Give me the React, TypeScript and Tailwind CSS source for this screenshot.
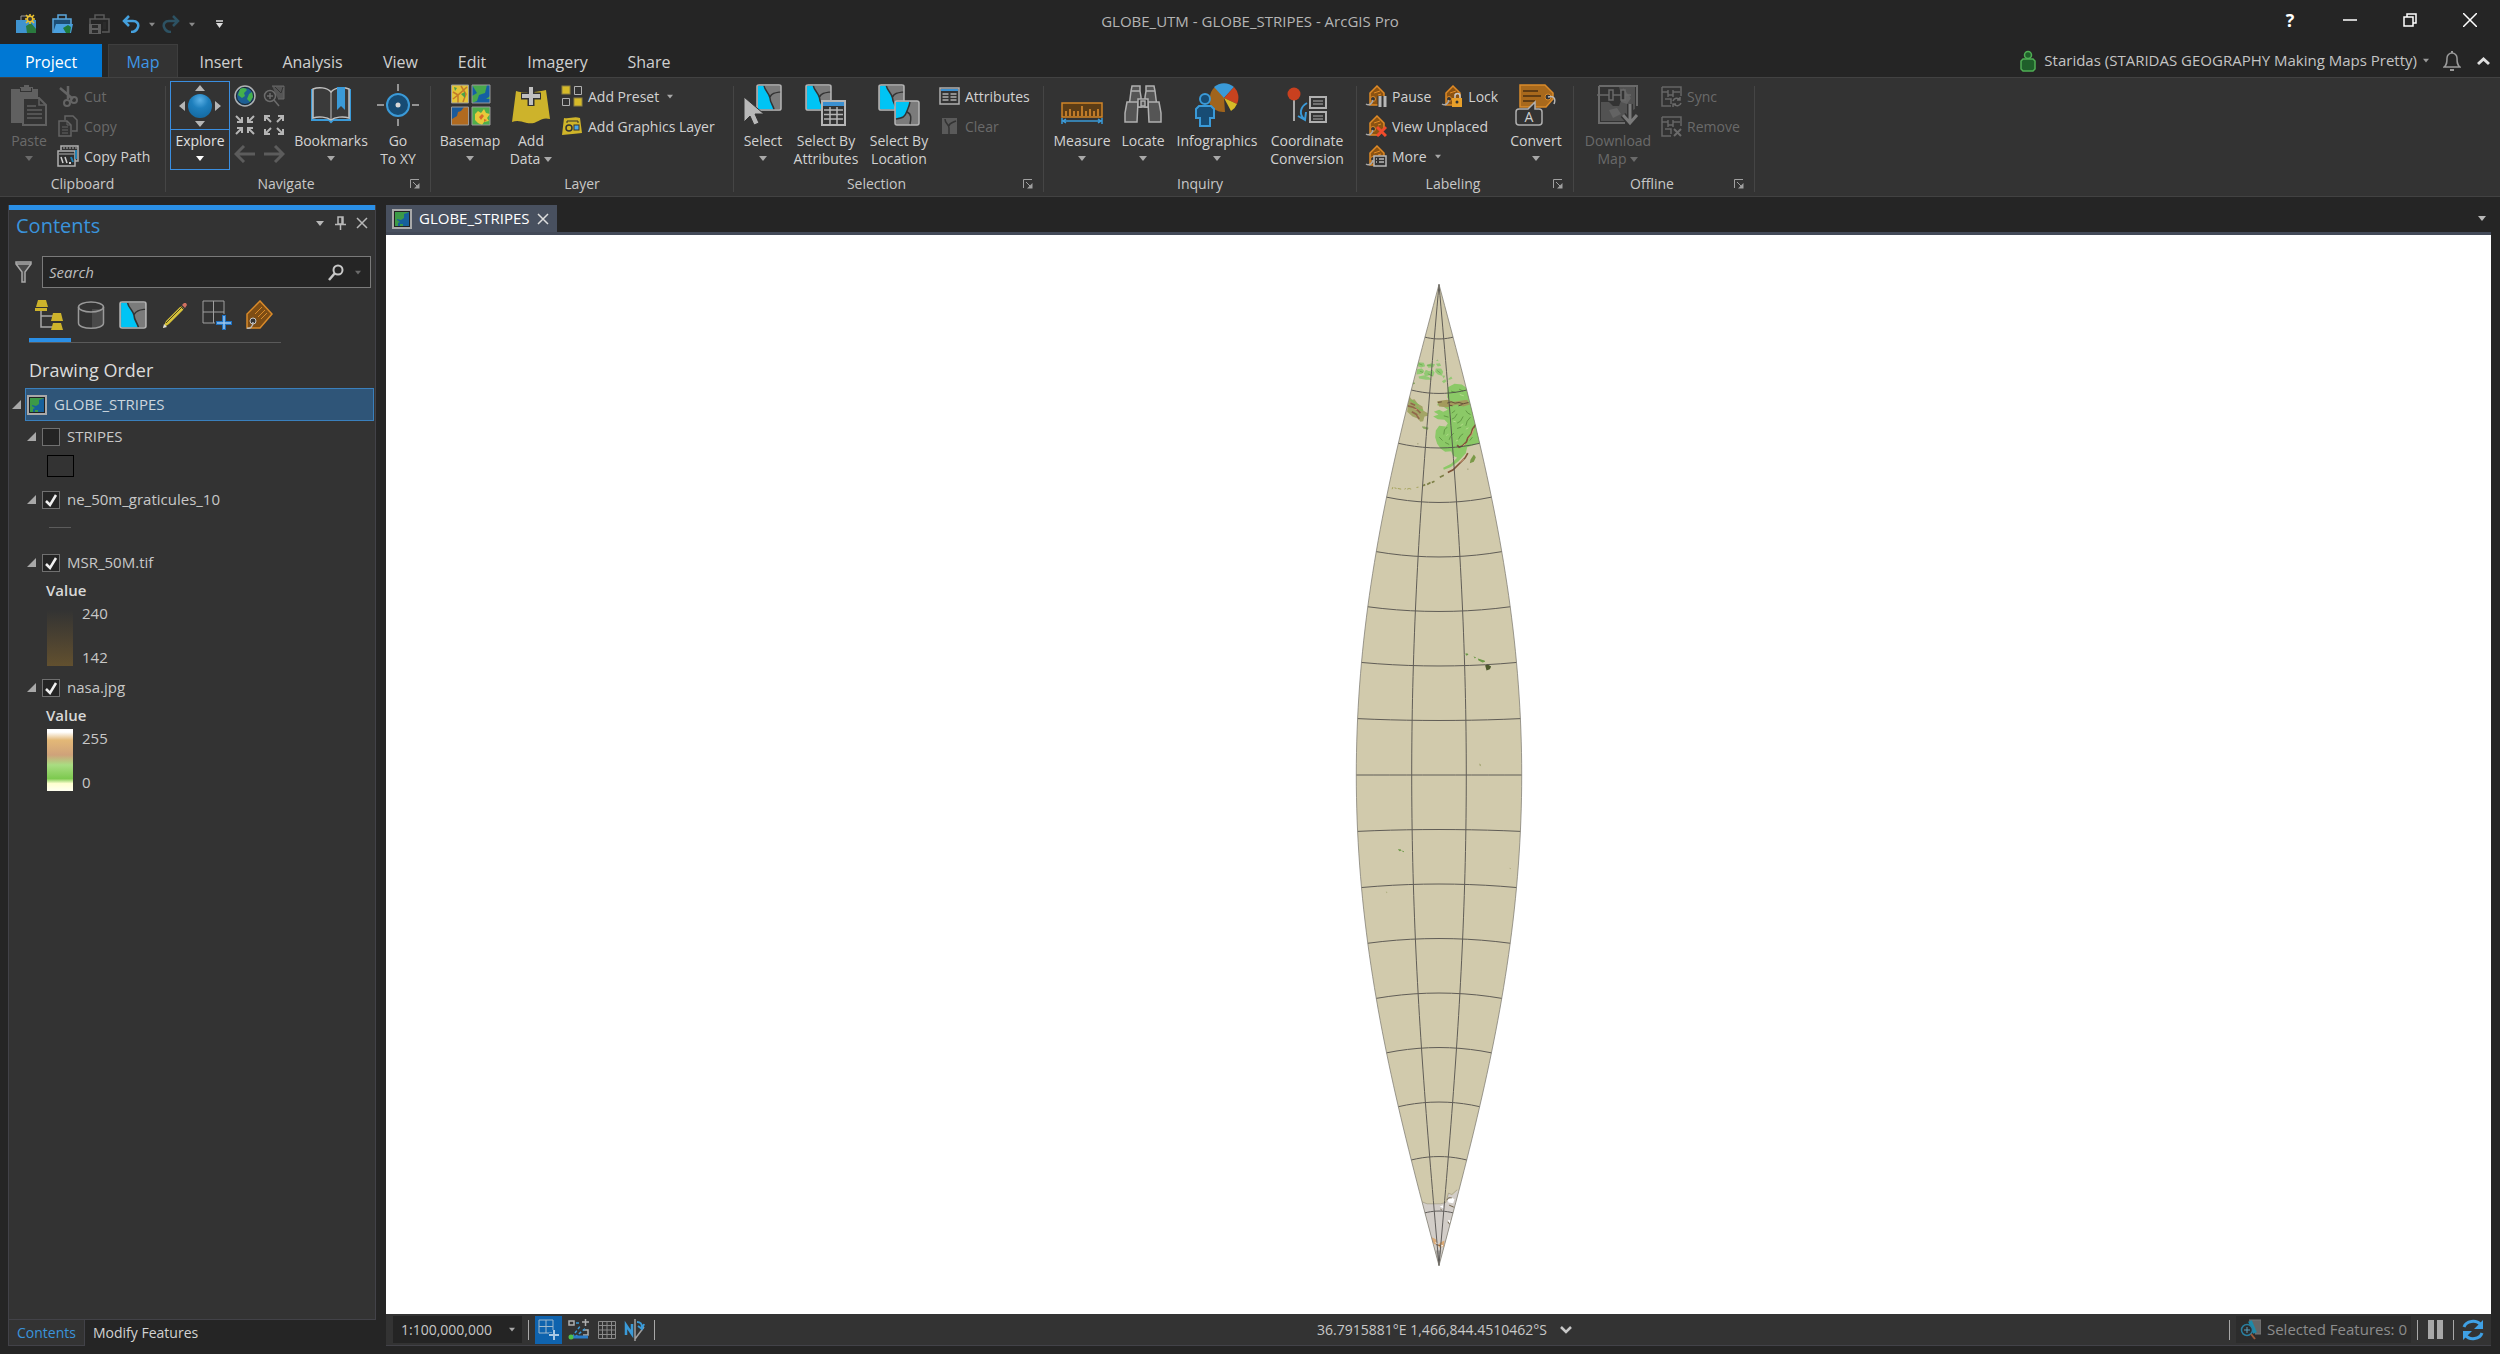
import { useState } from "react";
import type { ReactNode } from "react";

const R = 312.3;
const rad = (deg: number) => (deg * Math.PI) / 180;

// Transverse Mercator, central meridian in the middle of the strip
function project(lat: number, lon: number): [number, number] {
  const p = rad(lat);
  const l = rad(lon);
  const x = R * Math.atanh(Math.cos(p) * Math.sin(l));
  const y = -R * Math.atan2(Math.sin(p), Math.cos(p) * Math.cos(l));
  return [x, y];
}

function toPath(points: [number, number][]) {
  return points.map(([x, y], i) => `${i ? "L" : "M"}${x.toFixed(2)} ${y.toFixed(2)}`).join("");
}

function meridian(lon: number) {
  const pts: [number, number][] = [];
  for (let lat = -90; lat <= 90; lat += 2) pts.push(project(lat, lon));
  return pts;
}

function parallel(lat: number) {
  const pts: [number, number][] = [];
  for (let lon = -15; lon <= 15; lon += 3) pts.push(project(lat, lon));
  return pts;
}

const OUTLINE = toPath([...meridian(-15), ...meridian(15).reverse()]) + "Z";
const LATS = [-80, -70, -60, -50, -40, -30, -20, -10, 0, 10, 20, 30, 40, 50, 60, 70, 80];

function Arrow({ className = "text-[#a8a8a8]" }: { className?: string }) {
  return (
    <svg width="8" height="5" viewBox="0 0 8 5" className={`shrink-0 ${className}`} fill="currentColor">
      <path d="M0 0h8L4 5z" />
    </svg>
  );
}

function Launcher() {
  return (
    <button aria-label="Options" className="w-6 h-5 pl-1 flex items-center text-[#a0a0a0]">
      <svg width="10" height="10" viewBox="0 0 10 10" fill="none" stroke="currentColor">
        <path d="M.5 9V.5H9M3 3l5 5" />
        <path d="M9.500 4v5.500H4z" fill="currentColor" stroke="none" />
      </svg>
    </button>
  );
}

function Svg({ w, h, children }: { w: number; h: number; children: ReactNode }) {
  return (
    <svg width={w} height={h} viewBox={`0 0 ${w} ${h}`} fill="none" className="shrink-0">
      {children}
    </svg>
  );
}

function Group({ label, width, launcher, children }: { label: string; width: string; launcher?: boolean; children: ReactNode }) {
  return (
    <section className={`${width} shrink-0 flex`}>
      <div className="flex-1 min-w-0 flex flex-col">
        <div className="flex h-[94px] pt-[3px]">{children}</div>
        <div className="flex items-center h-[25px]">
          <span className="flex-1 text-center">{label}</span>
          {launcher && <Launcher />}
        </div>
      </div>
      <div className="w-px mt-2 mb-1 bg-[#454545]" />
    </section>
  );
}

type BigProps = { icon: ReactNode; lines: string[]; width: string; arrow?: boolean; disabled?: boolean };

function BigButton({ icon, lines, width, arrow, disabled }: BigProps) {
  const tone = disabled ? "text-[#6a6a6a]" : "text-[#d2d2d2]";
  return (
    <button disabled={disabled} className={`${width} h-[90px] shrink-0 flex flex-col items-center whitespace-nowrap ${tone}`}>
      <span className="h-12 flex items-center justify-center">{icon}</span>
      <span className="pt-[3px] flex flex-col items-center leading-[18px]">
        {lines.map((line, i) => (
          <span key={line} className="flex items-center gap-1">
            {line}
            {arrow && i === 1 && <Arrow className={disabled ? "text-[#6a6a6a]" : "text-[#a8a8a8]"} />}
          </span>
        ))}
        {arrow && lines.length === 1 && (
          <span className="h-4 flex items-center">
            <Arrow className={disabled ? "text-[#6a6a6a]" : "text-[#a8a8a8]"} />
          </span>
        )}
      </span>
    </button>
  );
}

function SmallButton({ icon, label, arrow, disabled }: { icon: ReactNode; label: string; arrow?: boolean; disabled?: boolean }) {
  return (
    <button
      disabled={disabled}
      className={`h-[30px] flex items-center whitespace-nowrap ${disabled ? "text-[#6a6a6a]" : "text-[#d2d2d2]"}`}
    >
      <span className="w-6 mr-1 flex justify-center">{icon}</span>
      {label}
      {arrow && <span className="ml-2 flex"><Arrow className="w-1.5 text-[#a8a8a8]" /></span>}
    </button>
  );
}

function MapIcon() {
  return (
    <Svg w={20} h={20}>
      <rect x="1" y="1" width="18" height="18" fill="#3c9a48" stroke="#a9a9a9" strokeWidth="2" />
      <rect x="2.500" y="2.500" width="15" height="15" stroke="#222" />
      <path d="M17 3v14h-6v-2H8v2H6v-3l2-1-3-2v-1l4 1 3-2v-4l3-1z" fill="#17609c" />
    </Svg>
  );
}

function Feature({ x = 0, y = 0, w = 26, h = 31 }: { x?: number; y?: number; w?: number; h?: number }) {
  return (
    <g transform={`translate(${x} ${y}) scale(${w / 26} ${h / 31})`}>
      <rect x="1" y="1" width="24" height="29" rx="2" fill="#7b7b7b" />
      <path d="M2 2h6c1 6 5 8 6 14 0 5 3 8 4 13H2z" fill="#00c4f5" />
      <path d="M8 2c1 6 5 8 6 14 0 5 3 8 4 13M14 15c2-5 6-5 11-6" stroke="#333" strokeWidth="1.500" />
      <rect x="1" y="1" width="24" height="29" rx="2" stroke="#b5b5b5" strokeWidth="1.500" />
    </g>
  );
}

function TableGlyph({ x = 0, y = 0 }: { x?: number; y?: number }) {
  return (
    <g transform={`translate(${x} ${y})`}>
      <rect x="1" y="1" width="23" height="24" fill="#333" stroke="#b5b5b5" strokeWidth="2" />
      <path d="M2 2h21v4H2z" fill="#3a8fd0" />
      <path d="M3 10h19M3 14.500h19M3 19h19" stroke="#b5b5b5" strokeWidth="1.500" />
      <path d="M9 7v17M16 7v17" stroke="#b5b5b5" strokeWidth="1.500" />
    </g>
  );
}

function TagGlyph({ children }: { children: ReactNode }) {
  return (
    <Svg w={22} h={22}>
      <path d="M12 1l7 7v6l-5 6H5V8z" fill="#8c5312" stroke="#e08a25" strokeWidth="1.500" />
      <path d="M9 8l6-2M13 10l3-1" stroke="#e08a25" />
      <circle cx="8" cy="14" r="2.500" fill="#333" stroke="#e08a25" />
      <path d="M8 15c-1 4-4 6-7 4" stroke="#a9a9a9" strokeWidth="1.500" />
      {children}
    </Svg>
  );
}

function TrayIcon({ children }: { children: ReactNode }) {
  return (
    <Svg w={21} h={21}>
      <path d="M1 1h19v9M1 1v19h9M1 6h6v3h5V6h7M7 4v7M12 4v7M4 13h6v5" stroke="#666" strokeWidth="1.500" />
      {children}
    </Svg>
  );
}

const pasteIcon = (
  <Svg w={38} h={42}>
    <path d="M1 5h9V3h4V1h5v2h4v2h5v9H14v25H1z" fill="#606060" />
    <path d="M10 4h12v4H10z" fill="#333" />
    <path d="M11 4h10v3H11z" fill="#606060" />
    <path d="M13 14h16l7 7v20H13z" fill="#333" stroke="#606060" strokeWidth="2" />
    <path d="M29 14v7h7M17 22h9M17 26h15M17 30h15M17 34h15" stroke="#606060" strokeWidth="1.500" />
  </Svg>
);

const cutIcon = (
  <Svg w={20} h={22}>
    <path d="M2 3l13 11M10 1v13" stroke="#646464" strokeWidth="2.500" />
    <circle cx="16" cy="15" r="3" stroke="#646464" strokeWidth="2" />
    <circle cx="9" cy="18" r="3" stroke="#646464" strokeWidth="2" />
  </Svg>
);

const copyIcon = (
  <Svg w={20} h={22}>
    <path d="M7 5V1h8l4 4v11h-5" stroke="#646464" strokeWidth="1.500" />
    <path d="M1 6h8l4 4v11H1z" stroke="#646464" strokeWidth="1.500" />
    <path d="M9 6v4h4M4 12h6M4 15h6M4 18h6" stroke="#646464" />
  </Svg>
);

const copyPathIcon = (
  <Svg w={22} h={22}>
    <path d="M4 5V1h17v15h-3" stroke="#b0b0b0" strokeWidth="1.500" />
    <path d="M6 3h14" stroke="#b0b0b0" strokeDasharray="2 1" />
    <rect x="1" y="6" width="17" height="15" fill="#2e2e2e" stroke="#b0b0b0" strokeWidth="1.500" />
    <path d="M2 9h15" stroke="#b0b0b0" />
    <path d="M4 12l2 6M8 12l2 6" stroke="#d0d0d0" strokeWidth="1.500" />
    <path d="M19 5v9M14 12l2 5" stroke="#1f7fb0" strokeWidth="2" />
    <path d="M12 17h2v2h-2z" fill="#d0d0d0" />
  </Svg>
);

const exploreIcon = (
  <Svg w={42} h={42}>
    <defs>
      <radialGradient id="ball" cx=".5" cy=".25" r=".7">
        <stop offset="0" stopColor="#5ab0e6" />
        <stop offset=".5" stopColor="#1e7fbd" />
        <stop offset="1" stopColor="#166da6" />
      </radialGradient>
    </defs>
    <circle cx="21" cy="21" r="12" fill="url(#ball)" />
    <path d="M21 0l5 6H16zM21 42l5-6H16zM0 21l6-5v10zM42 21l-6-5v10z" fill="#b5b5b5" />
  </Svg>
);

const globeIcon = (
  <Svg w={22} h={22}>
    <circle cx="11" cy="11" r="10" fill="#1d5f94" stroke="#b0b0b0" strokeWidth="1.500" />
    <circle cx="11" cy="11" r="8.500" stroke="#222" />
    <path d="M6 4c3-2 6-1 7 1l-3 3 1 3-3 2-4-3zM15 9l3-2 1 5-3 5-3-3z" fill="#45b04c" />
  </Svg>
);

const zoomSelIcon = (
  <Svg w={22} h={22}>
    <path d="M9 1h12v13h-6" fill="#555" stroke="#686868" />
    <path d="M12 2l6 6 2-6" stroke="#333" />
    <circle cx="7" cy="11" r="5.500" fill="#333" stroke="#6c6c6c" strokeWidth="1.500" />
    <path d="M4 11h6M7 8v6M11 15l5 6" stroke="#6c6c6c" strokeWidth="1.500" />
  </Svg>
);

const zoomInIcon = (
  <Svg w={22} h={22}>
    <path d="M2 2l6 6M8 3v5H3M20 2l-6 6M14 3v5h5M2 20l6-6M8 19v-5H3M20 20l-6-6M14 19v-5h5" stroke="#b5b5b5" strokeWidth="2" />
  </Svg>
);

const zoomOutIcon = (
  <Svg w={22} h={22}>
    <path d="M8 8L2 2M2 7V2h5M14 8l6-6M20 7V2h-5M8 14l-6 6M2 15v5h5M14 14l6 6M20 15v5h-5" stroke="#b5b5b5" strokeWidth="2" />
  </Svg>
);

const bookmarksIcon = (
  <Svg w={42} h={38}>
    <path d="M2 3v31h17l2 2 2-2h17V3" stroke="#3a9ad8" strokeWidth="2" />
    <path d="M21 6c-4-5-13-5-18-3v29c6-2 14-1 18 2 4-3 12-4 18-2V3c-5-2-14-2-18 3z" fill="#3a3a3a" stroke="#c0c0c0" strokeWidth="1.500" />
    <path d="M21 6v27" stroke="#c0c0c0" />
    <path d="M27 1h8v23l-4-4-4 4z" fill="#3a9ad8" />
  </Svg>
);

const goToIcon = (
  <Svg w={42} h={42}>
    <circle cx="21" cy="21" r="11" fill="#174c74" stroke="#3a9ad8" strokeWidth="2" />
    <circle cx="21" cy="21" r="2.500" fill="#d8d8d8" />
    <path d="M21 0v7M21 35v7M0 21h7M35 21h7" stroke="#b5b5b5" strokeWidth="1.500" />
  </Svg>
);

const basemapIcon = (
  <Svg w={42} h={42}>
    <rect x="3" y="1" width="16" height="18" fill="#e3c53a" />
    <path d="M4 8l5 3 9-8M9 11v8M12 2l5 8-3 8M4 15l5-4" stroke="#c47a2a" strokeWidth="1.500" />
    <path d="M12 10l4-2v6zM5 3l3 1-2 3z" fill="#4aa04a" />
    <rect x="23" y="1" width="18" height="18" fill="#155fa5" />
    <path d="M23 1h15l-2 8-6 2-2 6-5 2v-7l5-3zM37 15l4-3v3z" fill="#48a84c" />
    <rect x="3" y="23" width="16" height="18" fill="#b06a1f" />
    <path d="M3 23h12l-3 4-3 1-1 4-5 3z" fill="#1a5a9a" />
    <rect x="23" y="23" width="18" height="18" fill="#4fae4b" />
    <path d="M26 30l3-3 3 2 3-4 2 4 4 1-3 4 2 3-5 1-2 3-4-2-3-3z" fill="#e8c93a" />
    <path d="M30 33l3-3 2 2-3 4zM35 35l3 1-3 2z" fill="#d86a2a" />
    <path d="M2.500 1h17v18h-17zM23 1h18v18H23zM2.500 23h17v18h-17zM23 23h18v18H23z" stroke="#9a9a9a" />
  </Svg>
);

const addDataIcon = (
  <Svg w={40} h={40}>
    <path d="M5 6c10 3 20 1 30-1l4 29c-10-3-12 6-23 4-7-2-10-3-15-1z" fill="#cdb32b" />
    <path d="M20 1v20M10 11h20" stroke="#333" strokeWidth="7" />
    <path d="M20 2v18M11 11h18" stroke="#c0c0c0" strokeWidth="4" />
  </Svg>
);

const presetIcon = (
  <Svg w={22} h={22}>
    <rect x="1" y="1" width="8" height="8" fill="#d6ba28" stroke="#8f8240" />
    <rect x="13" y="13" width="8" height="8" fill="#d6ba28" stroke="#8f8240" />
    <path d="M13.500 1.500h7v8h-7zM1.500 13.500h7v7h-7z" stroke="#b0b0b0" />
  </Svg>
);

const graphicsIcon = (
  <Svg w={22} h={20}>
    <path d="M3 2c6 1 10-2 16 0l2 15c-6 1-13 1-20 2z" fill="#d0b529" />
    <path d="M6 7V5h11v2" stroke="#333" />
    <circle cx="8" cy="12" r="3" stroke="#333" strokeWidth="1.500" />
    <rect x="13" y="9" width="5" height="5" fill="#4aa8e8" stroke="#333" />
  </Svg>
);

const selectIcon = (
  <Svg w={40} h={42}>
    <Feature x={13} y={0} w={26} h={27} />
    <path d="M1 13v25l6-6 4 9 5-2-4-9h9z" fill="#b8b8b8" stroke="#333" />
  </Svg>
);

const selectAttrIcon = (
  <Svg w={42} h={42}>
    <Feature x={0} y={0} w={27} h={27} />
    <TableGlyph x={16} y={16} />
  </Svg>
);

const selectLocIcon = (
  <Svg w={42} h={42}>
    <Feature x={0} y={0} w={27} h={27} />
    <rect x="17" y="17" width="24" height="24" rx="2" fill="#7b7b7b" stroke="#b5b5b5" strokeWidth="1.500" />
    <path d="M18 18h14c-1 5-2 6-3 9-2 6-4 7-11 8z" fill="#00c4f5" />
    <path d="M32 18c-1 5-2 6-3 9-2 6-4 7-11 8M29 28c5 2 4 7 3 12" stroke="#333" strokeWidth="1.500" />
  </Svg>
);

const attributesIcon = (
  <Svg w={21} h={18}>
    <rect x="1" y="1" width="19" height="16" stroke="#b0b0b0" strokeWidth="1.500" />
    <path d="M2 2h17v2H2z" fill="#3a8fd0" />
    <path d="M3.500 7h6M3.500 10h6M3.500 13h6M11.500 7h6M11.500 10h6M11.500 13h6" stroke="#b0b0b0" strokeWidth="1.500" />
  </Svg>
);

const clearIcon = (
  <Svg w={17} h={18}>
    <rect x="1" y="1" width="15" height="16" fill="#5a5a5a" />
    <path d="M4 2c0 5 4 5 4 9v6M8 9c0-3 3-3 7-5" stroke="#333" strokeWidth="1.500" />
  </Svg>
);

const measureIcon = (
  <Svg w={42} h={42}>
    <rect x="1" y="19" width="40" height="14" fill="#5c3d16" stroke="#d08528" strokeWidth="1.500" />
    <path d="M5 32v-5M9 32v-7M13 32v-5M17 32v-5M21 32V22M25 32v-5M29 32v-7M33 32v-5M37 32v-7" stroke="#e09030" strokeWidth="1.500" />
    <path d="M1 34v6M41 34v6M2 37h38M5 35l-3 2 3 2M37 35l3 2-3 2" stroke="#3a9ad8" strokeWidth="1.500" />
  </Svg>
);

const locateIcon = (
  <Svg w={40} h={42}>
    <g stroke="#b0b0b0" strokeWidth="1.500" fill="#555">
      <path d="M9 2h8v5l1 6v10H6l2-16zM31 2h-8v5l-1 6v10h12L32 7z" />
      <path d="M4 18h11l-1 20H2l0-9zM36 18H25l1 20h12v-9z" />
      <path d="M15 15h10v8H15z" fill="#333" />
      <path d="M18 17h4v5h-4zM8 7h9M23 7h9" />
    </g>
  </Svg>
);

const infographicsIcon = (
  <Svg w={44} h={44}>
    <path d="M29 15V1a14 14 0 0 0-14 12l-1 6a15 15 0 0 0 16 10z" fill="#a0641c" />
    <path d="M29 15L19 4a15 15 0 0 1 20 0z" fill="#3a9ad8" />
    <path d="M29 15L39 4a15 15 0 0 1 3 17z" fill="#c8431f" />
    <path d="M29 15l13 6a14 14 0 0 1-6 7z" fill="#d6ba28" />
    <circle cx="10" cy="16" r="5" fill="#174c74" stroke="#3a9ad8" strokeWidth="2" />
    <path d="M4 23h12l3 3v9h-4v8H5v-8H1v-9z" fill="#174c74" stroke="#3a9ad8" strokeWidth="2" />
  </Svg>
);

const coordIcon = (
  <Svg w={42} h={38}>
    <path d="M8 10v25" stroke="#a8a8a8" strokeWidth="2" />
    <circle cx="8" cy="8" r="6.500" fill="#c9401f" />
    <path d="M21 17c-7 4-8 11-3 16M12 30l7 4 1-8" stroke="#3a9ad8" strokeWidth="2" />
    <path d="M24 11h16v11H24zM24 26h16v10H24z" stroke="#b0b0b0" strokeWidth="2" />
    <path d="M27 15h10M27 18h10M27 30h10M27 33h10" stroke="#b0b0b0" />
  </Svg>
);

const pauseLabelIcon = (
  <TagGlyph>
    <path d="M15 11v11M20 11v11" stroke="#333" strokeWidth="5" />
    <path d="M15 11v11M20 11v11" stroke="#b8b8b8" strokeWidth="3" />
  </TagGlyph>
);

const lockLabelIcon = (
  <TagGlyph>
    <path d="M14 14v-3a2.500 2.500 0 0 1 5 0v3" stroke="#c8c8c8" strokeWidth="1.500" />
    <path d="M11 13h10v9H11z" fill="#e8a02a" />
    <circle cx="16" cy="17" r="1.500" fill="#333" />
  </TagGlyph>
);

const unplacedIcon = (
  <TagGlyph>
    <path d="M12 12l9 9M21 12l-9 9" stroke="#ef4b2c" strokeWidth="3" />
  </TagGlyph>
);

const moreLabelIcon = (
  <TagGlyph>
    <path d="M9 11h12v10H9z" fill="#333" stroke="#b8b8b8" strokeWidth="1.500" />
    <path d="M11 14h1M14 14h5M11 17h1M14 17h5" stroke="#b8b8b8" strokeWidth="1.500" />
  </TagGlyph>
);

const convertIcon = (
  <Svg w={42} h={42}>
    <path d="M5 1h25l8 8v6l-7 8H5z" fill="#a8691c" stroke="#d98a2a" strokeWidth="1.500" />
    <path d="M8 7h15M8 12h18M8 17h12" stroke="#4a2f10" strokeWidth="1.500" />
    <circle cx="33" cy="13" r="3" fill="#333" stroke="#d98a2a" />
    <path d="M33 13c6-2 8 2 6 7" stroke="#b8b8b8" strokeWidth="1.500" />
    <path d="M4 25h9l7-7v7h4c2 0 3 1 3 3v10c0 2-1 3-3 3H4c-2 0-3-1-3-3V28c0-2 1-3 3-3z" fill="#333" stroke="#b0b0b0" strokeWidth="1.500" />
    <text x="14" y="38" textAnchor="middle" fill="#d0d0d0" fontSize="14">A</text>
  </Svg>
);

const downloadIcon = (
  <Svg w={42} h={42}>
    <path d="M2 2h38v20M2 2v37h26" stroke="#6a6a6a" strokeWidth="2" />
    <path d="M4 18h8l4 4h6l3-8-3-11h16v22l-4 2-4 10H4z" fill="#525252" />
    <path d="M26 4l8 10-4 6-6-2zM12 26l8-2 4 6-8 4z" fill="#636363" />
    <path d="M0 11h12M12 6v10h4V6zM16 11h8M24 6v10h4V6zM28 11h6" stroke="#6a6a6a" strokeWidth="1.500" fill="#333" />
    <path d="M33 20v18M26 31l7 8 7-8" stroke="#333" strokeWidth="6" />
    <path d="M33 20v18M26 31l7 8 7-8" stroke="#7a7a7a" strokeWidth="3" />
  </Svg>
);

const syncIcon = (
  <TrayIcon>
    <path d="M12 15c1-3 5-4 7-1M19 11v3h-3M20 17c-1 3-5 4-7 1M12 21v-3h3" stroke="#6a6a6a" strokeWidth="1.500" />
  </TrayIcon>
);

const removeIcon = (
  <TrayIcon>
    <path d="M13 13l7 7M20 13l-7 7" stroke="#6a6a6a" strokeWidth="2" />
  </TrayIcon>
);

function QuickAccess() {
  return (
    <div className="flex items-center pl-4 h-full pt-1">
      <button aria-label="New project" className="w-9">
        <Svg w={20} h={20}>
          <path d="M0 19V6h20v13z" fill="#3f93cf" />
          <path d="M5 6V2h9v4" stroke="#9a9a9a" />
          <path d="M10 12l5-3 5 6v4h-9z" fill="#2a7a3e" />
          <path d="M14 0v10M9 5h10M10 1l8 8M18 1l-8 8" stroke="#edc22e" strokeWidth="1.500" />
          <circle cx="14" cy="5" r="3.500" fill="#edc22e" />
          <circle cx="14" cy="5" r="2" fill="#3a3a3a" />
        </Svg>
      </button>
      <button aria-label="Open project" className="w-[37px]">
        <Svg w={21} h={20}>
          <path d="M1 19V5h18v5" fill="#1d4e74" stroke="#5ba6db" strokeWidth="1.500" />
          <path d="M6 5V1h8v4" stroke="#5ba6db" strokeWidth="1.500" />
          <path d="M4 10h17l-2 9H1z" fill="#4aa0de" />
          <path d="M11 14l5-3 3 2-1 6h-4z" fill="#1f7a3a" />
        </Svg>
      </button>
      <button aria-label="Save project" disabled className="w-[33px]">
        <Svg w={21} h={20}>
          <path d="M1 10V5h19v13h-7M6 5V1h9v4" stroke="#5a5a5a" strokeWidth="1.500" />
          <path d="M0 10h12v10H0z" fill="#5e5e5e" />
          <path d="M3 11h6v3H3zM3 16h6v3H3zM14 8h3v7h-3z" fill="#2b2b2b" />
        </Svg>
      </button>
      <button aria-label="Undo" className="w-5">
        <Svg w={18} h={18}>
          <path d="M7 1L2 6l5 5M2 6h9c4 0 6 3 5 6s-3 5-7 5" stroke="#45a0dd" strokeWidth="2.500" />
        </Svg>
      </button>
      <button aria-label="Undo list" className="w-5 flex justify-center"><Arrow className="text-[#8a8a8a] w-1.5" /></button>
      <button aria-label="Redo" className="w-5">
        <Svg w={18} h={18}>
          <path d="M11 1l5 5-5 5M16 6H7c-4 0-6 3-5 6s3 5 7 5" stroke="#2d5263" strokeWidth="2.500" />
        </Svg>
      </button>
      <button aria-label="Redo list" className="w-5 flex justify-center"><Arrow className="text-[#8a8a8a] w-1.5" /></button>
      <button aria-label="Customize" className="ml-[14px] flex">
        <Svg w={7} h={8}>
          <path d="M0 1h7" stroke="#ddd" strokeWidth="1.500" />
          <path d="M0 3h7L3.500 8z" fill="#ddd" />
        </Svg>
      </button>
    </div>
  );
}

function TitleBar() {
  return (
    <header className="h-11 grid grid-cols-3 text-[#d8d8d8]">
      <QuickAccess />
      <h1 className="text-center text-[15px] leading-[42px] text-[#b4b4b4]">GLOBE_UTM - GLOBE_STRIPES - ArcGIS Pro</h1>
      <div className="flex justify-end items-center h-10">
        <button aria-label="Help" className="w-[60px] text-[18px] font-bold text-white">?</button>
        <button aria-label="Minimize" className="w-[60px] flex justify-center">
          <Svg w={14} h={14}><path d="M0 7h14" stroke="#fff" strokeWidth="1.500" /></Svg>
        </button>
        <button aria-label="Restore" className="w-[60px] flex justify-center">
          <Svg w={14} h={14}><path d="M1 4h9v9H1zM4 4V1h9v9h-3" stroke="#fff" strokeWidth="1.500" /></Svg>
        </button>
        <button aria-label="Close" className="w-[60px] flex justify-center">
          <Svg w={14} h={14}><path d="M0 0l14 14M14 0L0 14" stroke="#fff" strokeWidth="1.500" /></Svg>
        </button>
      </div>
    </header>
  );
}

const TABS = [
  { name: "Map", width: "w-[70px]" },
  { name: "Insert", width: "w-[86px]" },
  { name: "Analysis", width: "w-[97px]" },
  { name: "View", width: "w-[79px]" },
  { name: "Edit", width: "w-[64px]" },
  { name: "Imagery", width: "w-[107px]" },
  { name: "Share", width: "w-[76px]" },
];

function TabBar() {
  const [active, setActive] = useState("Map");
  return (
    <nav className="h-[33px] flex text-[16px]">
      <button className="w-[102px] mr-1.5 pt-0.5 bg-[#0078d4] text-white">Project</button>
      {TABS.map((tab) => (
        <button
          key={tab.name}
          onClick={() => setActive(tab.name)}
          className={`${tab.width} pt-0.5 ${active === tab.name ? "bg-[#333] border border-b-0 border-[#3e3e3e] text-[#3f97e6]" : "text-[#d0d0d0]"}`}
        >
          {tab.name}
        </button>
      ))}
      <div className="ml-auto flex items-center pr-[10px] text-[15px] text-[#c4c4c4]">
        <Svg w={16} h={22}>
          <circle cx="8" cy="5" r="3.500" fill="#1f5f2a" stroke="#4fae54" strokeWidth="1.500" />
          <path d="M3 9h10l2 2v8l-2 2H3l-2-2v-8z" fill="#1f5f2a" stroke="#4fae54" strokeWidth="1.500" />
        </Svg>
        <button className="ml-2 mr-[14px] flex items-center gap-[6px]">
          Staridas (STARIDAS GEOGRAPHY Making Maps Pretty)
          <Arrow className="w-1.5 text-[#9a9a9a]" />
        </button>
        <button aria-label="Notifications" className="mr-4">
          <Svg w={18} h={22}>
            <path d="M1 17c3-2 3-5 3-9a5 5 0 0 1 10 0c0 4 0 7 3 9z" stroke="#9a9a9a" strokeWidth="1.500" />
            <path d="M9 1v2M7 20h4" stroke="#9a9a9a" strokeWidth="2" />
          </Svg>
        </button>
        <button aria-label="Collapse ribbon">
          <Svg w={13} h={10}><path d="M1 8l5.500-5L12 8" stroke="#e0e0e0" strokeWidth="3" /></Svg>
        </button>
      </div>
    </nav>
  );
}

function Ribbon() {
  return (
    <div className="h-[120px] bg-[#333] border-y border-[#424242] flex overflow-hidden text-[14px] text-[#c8c8c8]">
      <Group label="Clipboard" width="w-[166px]">
        <BigButton icon={pasteIcon} lines={["Paste"]} width="w-[54px] ml-0.5" arrow disabled />
        <div>
          <SmallButton icon={cutIcon} label="Cut" disabled />
          <SmallButton icon={copyIcon} label="Copy" disabled />
          <SmallButton icon={copyPathIcon} label="Copy Path" />
        </div>
      </Group>
      <Group label="Navigate" width="w-[265px]" launcher>
        <button className="ml-1 w-[60px] h-[89px] shrink-0 border border-[#3a8ee0] flex flex-col items-center text-[#e0e0e0]">
          <span className="w-full h-12 border-b border-[#3a8ee0] flex items-center justify-center">{exploreIcon}</span>
          <span className="leading-[18px] pt-0.5">Explore</span>
          <span className="h-4 flex items-center"><Arrow className="text-white" /></span>
        </button>
        <div className="w-[58px] h-[88px] grid grid-cols-2 grid-rows-3 justify-items-center items-center">
          <button aria-label="Full extent">{globeIcon}</button>
          <button aria-label="Zoom to selection" disabled>{zoomSelIcon}</button>
          <button aria-label="Fixed zoom in">{zoomInIcon}</button>
          <button aria-label="Fixed zoom out">{zoomOutIcon}</button>
          <button aria-label="Previous extent" disabled>
            <Svg w={22} h={18}><path d="M10 1L2 9l8 8M2 9h19" stroke="#5c5c5c" strokeWidth="3" /></Svg>
          </button>
          <button aria-label="Next extent" disabled>
            <Svg w={22} h={18}><path d="M12 1l8 8-8 8M20 9H1" stroke="#5c5c5c" strokeWidth="3" /></Svg>
          </button>
        </div>
        <BigButton icon={bookmarksIcon} lines={["Bookmarks"]} width="w-[86px]" arrow />
        <BigButton icon={goToIcon} lines={["Go", "To XY"]} width="w-[48px]" />
      </Group>
      <Group label="Layer" width="w-[303px]">
        <BigButton icon={basemapIcon} lines={["Basemap"]} width="w-[70px] ml-1" arrow />
        <BigButton icon={addDataIcon} lines={["Add", "Data"]} width="w-[52px]" arrow />
        <div className="pl-[3px]">
          <SmallButton icon={presetIcon} label="Add Preset" arrow />
          <SmallButton icon={graphicsIcon} label="Add Graphics Layer" />
        </div>
      </Group>
      <Group label="Selection" width="w-[310px]" launcher>
        <BigButton icon={selectIcon} lines={["Select"]} width="w-[50px] ml-1" arrow />
        <BigButton icon={selectAttrIcon} lines={["Select By", "Attributes"]} width="w-[76px]" />
        <BigButton icon={selectLocIcon} lines={["Select By", "Location"]} width="w-[70px]" />
        <div className="pl-[3px]">
          <SmallButton icon={attributesIcon} label="Attributes" />
          <SmallButton icon={clearIcon} label="Clear" disabled />
        </div>
      </Group>
      <Group label="Inquiry" width="w-[313px]">
        <BigButton icon={measureIcon} lines={["Measure"]} width="w-[68px] ml-1" arrow />
        <BigButton icon={locateIcon} lines={["Locate"]} width="w-[54px]" arrow />
        <BigButton icon={infographicsIcon} lines={["Infographics"]} width="w-[94px]" arrow />
        <BigButton icon={coordIcon} lines={["Coordinate", "Conversion"]} width="w-[86px]" />
      </Group>
      <Group label="Labeling" width="w-[217px]" launcher>
        <div className="pl-[7px] w-[145px] shrink-0">
          <div className="flex gap-[9px]">
            <SmallButton icon={pauseLabelIcon} label="Pause" />
            <SmallButton icon={lockLabelIcon} label="Lock" />
          </div>
          <SmallButton icon={unplacedIcon} label="View Unplaced" />
          <SmallButton icon={moreLabelIcon} label="More" arrow />
        </div>
        <BigButton icon={convertIcon} lines={["Convert"]} width="w-[68px]" arrow />
      </Group>
      <Group label="Offline" width="w-[181px]" launcher>
        <BigButton icon={downloadIcon} lines={["Download", "Map"]} width="w-[76px] ml-1.5" arrow disabled />
        <div className="pl-[3px]">
          <SmallButton icon={syncIcon} label="Sync" disabled />
          <SmallButton icon={removeIcon} label="Remove" disabled />
        </div>
      </Group>
    </div>
  );
}

const VIEW_ICONS: { name: string; icon: ReactNode }[] = [
  {
    name: "List by drawing order",
    icon: (
      <Svg w={28} h={30}>
        <path d="M6 11v16h12M6 16h12" stroke="#a8a8a8" strokeWidth="1.500" />
        <path d="M3 0h8l2 7H1zM0 8h12v3H0zM18 13h8l2 8H16zM18 23h8l2 7H16z" fill="#cdb32b" />
      </Svg>
    ),
  },
  {
    name: "List by data source",
    icon: (
      <Svg w={28} h={28}>
        <path d="M15 8h11v16c-3 2-7 3-11 3z" fill="#4a4a4a" />
        <ellipse cx="14" cy="6" rx="12.500" ry="5" stroke="#9a9a9a" strokeWidth="1.500" />
        <path d="M1.500 6v16c0 7 25 7 25 0V6" stroke="#9a9a9a" strokeWidth="1.500" />
      </Svg>
    ),
  },
  { name: "List by selection", icon: <Svg w={28} h={28}><Feature w={28} h={28} /></Svg> },
  {
    name: "List by editing",
    icon: (
      <Svg w={26} h={28}>
        <path d="M1 27l3-7L19 5l3 3L7 23z" fill="#d6c23a" />
        <path d="M1 27l1-4 3 3z" fill="#ddd" />
        <path d="M18 5l4 4M4 22L19 7" stroke="#4a4420" />
        <path d="M20 4l2-2h2l1 2-2 3z" fill="#d07060" />
      </Svg>
    ),
  },
  {
    name: "List by snapping",
    icon: (
      <Svg w={30} h={30}>
        <path d="M1 1h21v22H1zM11.500 1v22M1 12h21" stroke="#a0a0a0" />
        <path d="M22 14v17M13 23h17" stroke="#333" strokeWidth="6" />
        <path d="M22 15v15M14 23h16" stroke="#1c6fc0" strokeWidth="4" />
        <path d="M22 16v13M15 23h14" stroke="#9cc8ee" strokeWidth="1.500" />
      </Svg>
    ),
  },
  {
    name: "List by labeling",
    icon: (
      <Svg w={28} h={30}>
        <path d="M15 1l12 13-12 14H2V14z" fill="#7e4d14" stroke="#d98a2a" strokeWidth="1.500" />
        <path d="M10 14l7-7M13 17l7-7M16 19l6-6" stroke="#d98a2a" />
        <circle cx="8" cy="21" r="3" fill="#333" stroke="#c8c8c8" />
        <path d="M8 22c0 5-3 7-6 6" stroke="#b8b8b8" strokeWidth="1.500" />
      </Svg>
    ),
  },
];

function Expander() {
  return (
    <svg width="9" height="9" viewBox="0 0 9 9" className="shrink-0" fill="#a8a8a8">
      <path d="M9 0v9H0z" />
    </svg>
  );
}

function LayerRow({ name, defaultChecked }: { name: string; defaultChecked?: boolean }) {
  return (
    <div className="h-[31px] flex items-center gap-1.5 pl-[18px]">
      <Expander />
      <label className="flex items-center">
        <span className="grid w-[18px] h-[18px] mr-[7px]">
          <input
            type="checkbox"
            defaultChecked={defaultChecked}
            className="peer col-start-1 row-start-1 appearance-none w-[18px] h-[18px] border border-[#707070] bg-[#242424]"
          />
          <svg viewBox="0 0 18 18" fill="none" className="hidden peer-checked:block pointer-events-none col-start-1 row-start-1 w-[18px] h-[18px]">
            <path d="M4 10l4 4 6-10" stroke="#f0f0f0" strokeWidth="2.500" />
          </svg>
        </span>
        {name}
      </label>
    </div>
  );
}

function Ramp({ high, low, gradient }: { high: number; low: number; gradient: string }) {
  return (
    <>
      <div className="h-[26px] pl-[37px] font-semibold leading-6 text-[#d8d8d8]">Value</div>
      <div className="h-[68px] pl-[38px] flex gap-[9px]">
        <div className={`w-[26px] h-[62px] ${gradient}`} />
        <div className="h-[62px] flex flex-col justify-between leading-[18px]">
          <span>{high}</span>
          <span>{low}</span>
        </div>
      </div>
    </>
  );
}

function ContentsPanel() {
  const [view, setView] = useState(VIEW_ICONS[0].name);
  return (
    <aside className="w-[368px] shrink-0 flex flex-col text-[15px] text-[#c8c8c8]">
      <div className="flex-1 bg-[#333] border border-t-0 border-[#424248] flex flex-col">
        <div className="h-[5px] bg-[#2a8fe6]" />
        <div className="h-[46px] flex items-start pt-[3px] pl-[7px] pr-[7px]">
          <h2 className="flex-1 text-[20px] leading-[26px] text-[#3a93dc]">Contents</h2>
          <div className="flex items-center gap-[10px] h-5">
            <button aria-label="Menu"><Arrow className="w-2.5 text-[#b8b8b8]" /></button>
            <button aria-label="Auto hide">
              <Svg w={11} h={14}><path d="M3 1h5v7H3zM7 1v7M0 8.500h11M5.500 9v5" stroke="#b8b8b8" strokeWidth="1.500" /></Svg>
            </button>
            <button aria-label="Close">
              <Svg w={12} h={12}><path d="M1 1l10 10M11 1L1 11" stroke="#b8b8b8" strokeWidth="1.500" /></Svg>
            </button>
          </div>
        </div>
        <div className="flex items-center h-8 pl-1.5 pr-1">
          <button aria-label="Filter" className="w-[27px] shrink-0">
            <Svg w={17} h={22}><path d="M1 1h15v2l-6 8v10H7V11L1 3zM1 3h15" fill="#4a4a4a" stroke="#a8a8a8" strokeWidth="1.500" /></Svg>
          </button>
          <div className="flex-1 h-8 border border-[#7a7a7a] bg-[#252525] flex items-center pr-[9px]">
            <input type="text" aria-label="Search" placeholder="Search" className="flex-1 min-w-0 bg-transparent pl-1.5 italic outline-none placeholder:text-[#bdbdbd]" />
            <button aria-label="Run search">
              <Svg w={16} h={17}>
                <circle cx="10" cy="6" r="4.500" stroke="#c8c8c8" strokeWidth="2" />
                <path d="M7 9l-6 7" stroke="#c8c8c8" strokeWidth="2.500" />
              </Svg>
            </button>
            <button aria-label="Search options" className="ml-[11px]"><Arrow className="w-1.5 text-[#6a6a6a]" /></button>
          </div>
        </div>
        <div className="ml-5 mt-[7px] flex self-start border-b border-[#5a5a5a]">
          {VIEW_ICONS.map((v) => (
            <button
              key={v.name}
              aria-label={v.name}
              onClick={() => setView(v.name)}
              className={`w-[42px] h-[47px] pb-1 pr-0.5 flex items-center justify-center border-b-4 ${view === v.name ? "border-[#2a8fe6]" : "border-transparent"}`}
            >
              {v.icon}
            </button>
          ))}
        </div>
        <h3 className="pl-5 pt-3 h-[45px] text-[18px] leading-[30px] text-[#dcdcdc]">Drawing Order</h3>
        <div className="flex items-center gap-1 pl-[3px] pr-px">
          <Expander />
          <button className="flex-1 h-[33px] flex items-center gap-[7px] pl-px bg-[#2f5578] border border-[#3a80bd] text-left text-[#ccd6de]">
            <MapIcon />
            GLOBE_STRIPES
          </button>
        </div>
        <LayerRow name="STRIPES" />
        <div className="h-8 pl-[38px] pt-[3px]"><div className="w-[27px] h-[22px] border border-black" /></div>
        <LayerRow name="ne_50m_graticules_10" defaultChecked />
        <div className="h-8 pl-10 pt-3"><div className="w-[22px] h-px bg-[#5c5c5c]" /></div>
        <LayerRow name="MSR_50M.tif" defaultChecked />
        <Ramp high={240} low={142} gradient="bg-[linear-gradient(#333_10%,#62502f)]" />
        <LayerRow name="nasa.jpg" defaultChecked />
        <Ramp high={255} low={0} gradient="bg-[linear-gradient(#fff_5%,#e3b877_18%,#cfa27a_42%,#a9dd82_58%,#7dc94f_80%,#ffffd0_88%,#fffff0)]" />
      </div>
      <div className="h-[26px] flex leading-6 text-[14px]">
        <button className="w-[77px] bg-[#333] border border-t-0 border-[#424248] text-[#3a93dc]">Contents</button>
        <button className="px-2 text-[#d2d2d2]">Modify Features</button>
      </div>
    </aside>
  );
}

function GlobeStrip() {
  return (
    <svg width="170" height="984" viewBox="-85 -492 170 984" fill="none" role="img" aria-label="Globe strip">
      <defs>
        <clipPath id="gore"><path d={OUTLINE} /></clipPath>
      </defs>
      <path d={OUTLINE} fill="#d1caac" />
      <g clipPath="url(#gore)">
        {/* Arctic islands, Chukotka, Alaska and the Aleutians */}
        <g transform="translate(-108.500 -504.500) scale(.3333)">
          <path d="M262 275l18 2 4 10-12 4-10-4zM288 284l14-6 12 4-6 8-14 2zM316 280l12-2 4 8-10 2zM260 296l14-2 8 8-8 8-16 2zM286 298l10 4 10-4 6 8-4 12-12-4-10 4-6-8zM316 294l16 0 6 10-4 12-12-4-8-8zM264 318l18-4 14 6 8 8-18 0-20-4zM334 314l10 2-4 8z" fill="#93c974" />
          <path d="M266 280l10 4M292 310l14 6M320 300l10 8M290 284l12 0M268 302l10 4" stroke="#6fae52" strokeWidth="3" />
          <path d="M316 270l6-3 2 5zM334 332l10-6 4 6-8 6zM352 326l10-8 4 6-8 4z" fill="#93c974" />
          <path d="M236 376l8 12 8-2 10 14 14 8 2 12 14 8 0 8-10 2-4 14-8 2-8-10-16-6-16-14z" fill="#a3a566" />
          <path d="M232 406l16 4 14 10 8 8M244 424l14 8 8 14M240 398l14 6" stroke="#90684a" strokeWidth="5" />
          <path d="M240 388l14 10 10 6M266 416l12 4M258 410l6 4" stroke="#86b85a" strokeWidth="5" />
          <path d="M250 416l10 2M262 434l6 6" stroke="#c39a76" strokeWidth="3" />
          <path d="M242 334l10 2 2 4-8 2zM274 468l8 0 12 4-2 6-14-4z" fill="#8aa860" />
          <path d="M352 350l20-10 22 2 14 10 8 24 12 36 14 46 10 64-10-4-14 6-18 6-4 18-22 24-24 18-20 8-2-6 24-12 18-18-12-6-6-14-18 2-14-10-10-14-6-20 2-20 10-14 20 2 6-10-10-10-20-2-14-8 16-6-14-8 16-6 12 6 14-6-14-10-18-4 4-10 20 2 12-6-6-10z" fill="#8bc967" />
          <path d="M320 392l30-4 20 6 40-6 8 14-20 6-18-6-30 8-24-2z" fill="#a39a5c" />
          <path d="M350 398l12-4 12 4 12-2 12 4 16-4M322 396l12-2M356 404l10 2M384 406l12-4" stroke="#66503a" strokeWidth="3" />
          <path d="M436 462l-10 14-4 14-10 12-4 12-12 12-10 4-6-6M412 548l-8 14-14 14-22 22-16 8" stroke="#815539" strokeWidth="5" />
          <path d="M430 474l-6 18-10 12M404 520l-8 8M400 566l-12 10" stroke="#cf9c76" strokeWidth="3" />
          <path d="M380 430l-8 12-8 4M398 438l-8 14-10 6M420 440l-10 12-4 14M350 470l-8 8-2 14M370 488l-10 10-4 10M398 490l-8 6-8 14M374 420l-10 8M406 420l6 8 8 4M340 436l14 4M362 362l14 4M386 356l12 6M326 500l10 10M344 516l12 6M426 500l-8 10M380 474l12-4" stroke="#639a45" strokeWidth="3" />
          <path d="M368 452l8 2M390 466l8-6M348 496l6-6M406 476l8-4M376 512l8-4M388 372l12 4" stroke="#b4d98c" strokeWidth="3" />
          <path d="M340 614l-12 6M312 632l-8 4M300 636l-10 6M284 642l-6 4" stroke="#7d8046" strokeWidth="5" />
          <path d="M264 650l-6 1M242 656l-6-2-6 2M226 654l-4 2M212 656l-10-2M198 654l-6-2M187 650l-2 6" stroke="#a6a35c" strokeWidth="3" />
          <path d="M430 552l6 8-6 14-12 4 2-10z" fill="#7a9a48" />
          <path d="M260 520h4M410 596h4" stroke="#9a9a70" strokeWidth="3" />
        </g>
        {/* Pacific islands */}
        <g transform="translate(-98.500 -174.500) scale(.3333)" fill="#6d9a48">
          <path d="M374 160l6-2 4 4-6 4zM399 168l8 2-4 4zM412 174l8 2 4 2 8 2 2 4-8 2-12-6zM172 746l8 0 3 4-6 2zM182 750l9 2-2 3z" />
          <path d="M434 194l8-2 10 6-4 8-10 4z" fill="#4c5a2c" />
          <path d="M416 489l5 2 1 6-5-2zM136 872l5 4-3 2zM506 802l6 2-2 2z" fill="#a9aa78" />
        </g>
        {/* Antarctica */}
        <g transform="translate(-98.500 345.500) scale(.3333)">
          <path d="M240 244l20 6h40l16-4 8-26 12 4 16-16v240H240z" fill="#d2cdc8" />
          <path d="M244 244l16 6h40l16-4 8-28 10 4 16-14" stroke="#8d8870" strokeWidth="1.500" />
          <path d="M322 238l10-8 10 6-4 12-14-2zM298 258l10-4 2 10zM322 298l8 2-2 10z" fill="#fff" />
          <path d="M320 238l4-6 10 0M326 254l14 6M300 266l4 3M322 304l6 8" stroke="#70634a" strokeWidth="3" />
          <path d="M274 350l12 6 4 12-8 4-6-10zM300 366l12-6-2 18-12 4-6-8z" fill="#dcaa76" />
          <path d="M284 364l8 4-2 8zM300 372l8 2-4 6z" fill="#fff" />
          <path d="M286 372l14 4" stroke="#8a6a4a" strokeWidth="3" />
          <path d="M286 390l16 0-8 48z" fill="#aaa7a2" />
        </g>
      </g>
      <g stroke="#4d4a48" strokeWidth="1" opacity=".85">
        {LATS.map((lat) => (
          <path key={lat} d={toPath(parallel(lat))} />
        ))}
        <path d={toPath(meridian(-5))} />
        <path d={toPath(meridian(5))} />
      </g>
      <path d={OUTLINE} stroke="#77756c" strokeWidth="1" opacity=".7" />
    </svg>
  );
}

function StatusBar() {
  const sep = <div className="w-px h-5 bg-[#a8a8a8]" />;
  return (
    <footer className="h-8 bg-[#333] border-b border-[#424248] flex items-center px-[7px] text-[15px] text-[#c8c8c8]">
      <div className="flex-1 flex items-center">
        <div className="w-[129px] h-[27px] bg-[#242424] flex items-center relative">
          <select aria-label="Map scale" className="appearance-none w-full h-full pl-2 bg-transparent text-[14px] outline-none">
            <option>1:100,000,000</option>
          </select>
          <span className="absolute right-[7px] pointer-events-none"><Arrow className="w-1.5 text-[#a8a8a8]" /></span>
        </div>
        <div className="ml-1.5 flex items-center gap-1.5">
          {sep}
          <button aria-label="Snapping" className="w-[27px] h-7 bg-[#0f63ae] flex items-center justify-center">
            <Svg w={21} h={21}>
              <path d="M1 1h14v13H1zM8 1v13M1 7.500h14" stroke="#9fb8cc" />
              <path d="M16 11v10M11 16h10" stroke="#0f63ae" strokeWidth="4" />
              <path d="M16 11v10M11 16h10" stroke="#a9c8e4" strokeWidth="2" />
            </Svg>
          </button>
          <button aria-label="Constraints">
            <Svg w={22} h={21}>
              <path d="M1 2h5v4H1zM15 11h5v5h-5M14 3h7M17.500 0v7" stroke="#b0b0b0" strokeWidth="1.500" />
              <path d="M8 4h5M4 18L13 6M7 18l11-9" stroke="#3a9ad8" strokeWidth="1.500" strokeDasharray="3 2" />
              <path d="M4 18h16" stroke="#2a7cc8" strokeWidth="3" />
              <circle cx="3" cy="18" r="2.500" fill="#4fbf4a" />
            </Svg>
          </button>
          <button aria-label="Grid" className="mx-0.5">
            <Svg w={18} h={18}><path d="M.5.500h17v17H.5zM4.500 0v18M9 0v18M13.500 0v18M0 4.500h18M0 9h18M0 13.500h18" stroke="#8a8a8a" /></Svg>
          </button>
          <button aria-label="Ground to grid" className="mr-0.5">
            <Svg w={22} h={22}>
              <path d="M2 16V6l6 9V5" stroke="#3a9ad8" strokeWidth="2.500" />
              <path d="M11 0v22M11 20L20 8" stroke="#a0a0a0" strokeWidth="1.500" />
              <path d="M13 3c4 0 5 2 5 6M14 7l4 3 2-5" stroke="#3a9ad8" strokeWidth="2" />
            </Svg>
          </button>
          {sep}
        </div>
      </div>
      <button className="flex items-center gap-[13px] pl-3 text-[14px]">
        36.7915881°E 1,466,844.4510462°S
        <Svg w={12} h={10}><path d="M1 2l5 5 5-5" stroke="#c8c8c8" strokeWidth="2.500" /></Svg>
      </button>
      <div className="flex-1 flex items-center justify-end">
        {sep}
        <button className="ml-1.5 h-[27px] px-1 bg-[#2c2c2c] flex items-center gap-1.5 text-[#8c8c8c]">
          <Svg w={21} h={21}>
            <path d="M9 1h12v14h-6" fill="#666" stroke="#777" />
            <path d="M10 2l5 12" stroke="#1f8aa8" strokeWidth="4" />
            <circle cx="7" cy="11" r="5.500" fill="#2c2c2c" stroke="#2a7fa0" strokeWidth="1.500" />
            <path d="M4 11h6M7 8v6" stroke="#5aa0c0" />
            <path d="M11 15l4 5" stroke="#9a5a3a" strokeWidth="2" />
          </Svg>
          Selected Features: 0
        </button>
        <div className="w-px h-5 bg-[#a8a8a8] ml-1.5" />
        <button aria-label="Pause drawing" className="mx-2.5">
          <Svg w={15} h={19}><path d="M0 0h6v19H0zM9 0h6v19H9z" fill="#a8a8a8" /></Svg>
        </button>
        {sep}
        <button aria-label="Refresh" className="ml-2">
          <Svg w={22} h={22}>
            <path d="M2 8c2-6 12-8 17-2M20 14c-2 6-12 8-17 2" stroke="#3fa0e4" strokeWidth="3" />
            <path d="M21 1v9h-9zM1 21v-9h9z" fill="#3fa0e4" />
          </Svg>
        </button>
      </div>
    </footer>
  );
}

function MapView() {
  return (
    <main className="flex-1 min-w-0 flex flex-col">
      <div className="h-[27px] flex items-center">
        <div className="h-full bg-[#48505f] flex items-center pl-1.5 pr-2 gap-[7px] text-[15px] text-white">
          <MapIcon />
          <span>GLOBE_STRIPES</span>
          <button aria-label="Close view">
            <Svg w={12} h={12}><path d="M1 1l10 10M11 1L1 11" stroke="#ddd" strokeWidth="1.500" /></Svg>
          </button>
        </div>
        <button aria-label="Views" className="ml-auto mr-1"><Arrow className="w-2.5 text-[#b8b8b8]" /></button>
      </div>
      <div className="h-[3px] bg-[#434a58]" />
      <div className="flex-1 bg-white flex items-center justify-center">
        <GlobeStrip />
      </div>
      <StatusBar />
    </main>
  );
}

export default function App() {
  return (
    <div className="min-h-screen flex flex-col bg-[#252525] font-['Open_Sans',sans-serif] select-none">
      <TitleBar />
      <TabBar />
      <Ribbon />
      <div className="flex-1 flex gap-[10px] pl-2 pr-[9px] py-2">
        <ContentsPanel />
        <MapView />
      </div>
    </div>
  );
}
